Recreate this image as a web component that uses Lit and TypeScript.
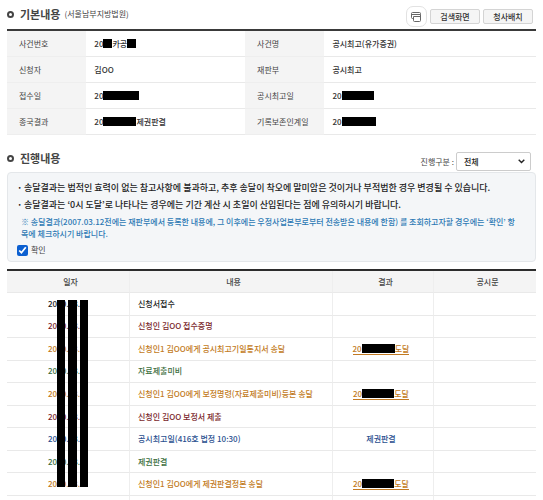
import { LitElement, html, css, nothing } from "lit";
import { customElement, property } from "lit/decorators.js";
import { styleMap } from "lit/directives/style-map.js";

type Part = string | number;

interface Row {
  tone: string;
  date: string;
  text: string;
  result?: Part[];
  link?: boolean;
}

// Numbers in a value are the widths of redaction bars.
const INFO: [string, Part[]][][] = [
  [["사건번호", ["20", 9, "카공", 9]], ["사건명", ["공시최고(유가증권)"]]],
  [["신청자", ["김OO"]], ["재판부", ["공시최고"]]],
  [["접수일", ["20", 36]], ["공시최고일", ["20", 32]]],
  [["종국결과", ["20", 33, "제권판결"]], ["기록보존인계일", ["20", 34]]],
];

const ROWS: Row[] = [
  { tone: "black", date: "2000.03.", text: "신청서접수" },
  { tone: "red", date: "2000.03.", text: "신청인 김OO 접수증명" },
  { tone: "orange", date: "2000.03.", text: "신청인1 김OO에게 공시최고기일통지서 송달", result: ["20", 33, "도달"], link: true },
  { tone: "green", date: "2000.03.", text: "자료제출미비" },
  { tone: "orange", date: "2000.03.", text: "신청인1 김OO에게 보정명령(자료제출미비)등본 송달", result: ["20", 32, "도달"], link: true },
  { tone: "red", date: "2000.03.", text: "신청인 김OO 보정서 제출" },
  { tone: "blue", date: "2000.03.", text: "공시최고일(416호 법정 10:30)", result: ["제권판결"] },
  { tone: "green", date: "2000.03.", text: "제권판결" },
  { tone: "orange", date: "2000.03.", text: "신청인1 김OO에게 제권판결정본 송달", result: ["20", 32, "도달"], link: true },
];

@customElement("masked-text")
class MaskedText extends LitElement {
  @property({ attribute: false }) parts: Part[] = [];

  static styles = css`
    .bar {
      display: inline-block;
      height: 9px;
      background: #000;
      vertical-align: -1px;
    }
  `;

  render() {
    return this.parts.map((p) =>
      typeof p === "number"
        ? html`<span class="bar" style=${styleMap({ width: `${p}px` })}></span>`
        : p
    );
  }
}

@customElement("app-root")
class AppRoot extends LitElement {
  static styles = css`
    :host {
      display: block;
      padding: 6px 7px 0;
      background: #fff;
      color: #333;
      font: 500 8px/12px "Noto Sans CJK KR", "Noto Sans", sans-serif;
    }
    * {
      box-sizing: border-box;
    }
    .head {
      display: flex;
      align-items: flex-start;
      height: 23px;
    }
    .head.second {
      height: 22px;
      margin-top: 15px;
      padding-right: 5px;
    }
    .title {
      display: flex;
      align-items: center;
      height: 16px;
    }
    .ring {
      width: 7px;
      height: 7px;
      border: 2px solid #444;
      border-radius: 50%;
      margin-right: 6px;
    }
    h2 {
      margin: 0;
      font-size: 11px;
      line-height: 16px;
      font-weight: 700;
      color: #444;
    }
    .court {
      margin-left: 4px;
      font-weight: 400;
      color: #444;
    }
    .tools {
      margin-left: auto;
      padding-right: 3px;
      display: flex;
      align-items: center;
      gap: 3px;
    }
    button {
      font: inherit;
      color: #333;
      width: 50px;
      height: 15px;
      padding: 0;
      border: 1px solid #d4d4d4;
      border-radius: 2px;
      background: #f5f5f5;
    }
    .print {
      display: grid;
      place-items: center;
      width: 21px;
      height: 21px;
      border-color: #e2e2e2;
      border-radius: 7px;
      background: #fff;
    }
    table {
      width: 100%;
      table-layout: fixed;
      border-collapse: separate;
      border-spacing: 0;
    }
    th,
    td {
      padding: 0;
      font-weight: 500;
      border-bottom: 1px solid #e9e9e9;
    }
    .info {
      border-top: 2px solid #3a3a3a;
    }
    .info th,
    .info td {
      height: 26px;
      text-align: left;
    }
    .info th {
      padding-left: 12px;
      background: #f4f4f4;
      font-weight: 400;
      color: #444;
      border-bottom-color: #eee;
    }
    .info td {
      padding-left: 8px;
    }
    .i1 { width: 15%; }
    .i2 { width: 30%; }
    .filter {
      margin-left: auto;
      align-self: flex-end;
      display: flex;
      align-items: center;
      gap: 2px;
      padding-bottom: 1px;
      font-weight: 400;
      color: #444;
    }
    .pick {
      display: grid;
      align-items: center;
    }
    .pick > * {
      grid-area: 1 / 1;
    }
    .pick svg {
      justify-self: end;
      margin-right: 6px;
      pointer-events: none;
    }
    select {
      appearance: none;
      width: 75px;
      height: 19px;
      padding: 0 7px;
      border: 1px solid #ccc;
      border-radius: 2px;
      background: #fff;
      font: inherit;
      font-weight: 500;
      color: #222;
    }
    .notice {
      padding: 6px 9px 5px;
      border: 1px solid #e4e7ea;
      border-radius: 4px;
      background: #f4f6f8;
    }
    ul {
      margin: 0;
      padding: 0;
      list-style: none;
      font-size: 9px;
      line-height: 17px;
      color: #222;
    }
    li {
      display: flex;
    }
    li::before {
      content: "·";
      width: 7px;
      font-weight: 700;
    }
    .note {
      margin: 3px 0 0;
      padding: 0 6px 0 4px;
      color: #2b78b4;
    }
    .agree {
      display: flex;
      align-items: center;
      gap: 3px;
      margin-top: 4px;
      font-weight: 400;
      color: #444;
    }
    .agree input {
      width: 11px;
      height: 11px;
      margin: 0;
      accent-color: #0b5fd0;
    }
    .wrap {
      position: relative;
      margin-top: 7px;
    }
    .log {
      height: 231px;
      border-top: 2px solid #2c2c2c;
    }
    .log th {
      height: 22px;
      padding-left: 5px;
      background: #f4f4f4;
      color: #444;
    }
    .log td {
      text-align: center;
      padding-right: 4px;
    }
    .log th + th,
    .log td + td {
      border-left: 1px solid #eee;
    }
    .log .date {
      text-align: left;
      padding-left: 41px;
    }
    .log .text {
      text-align: left;
      padding-left: 8px;
    }
    .log .tail td {
      height: 4px;
      border-bottom: 0;
    }
    .c1 { width: 122px; }
    .c3 { width: 101px; }
    .c4 { width: 103px; }
    .black { color: #222; }
    .red { color: #7a1f2b; }
    .orange { color: #c27a22; }
    .green { color: #3c6e40; }
    .blue { color: #2a4f8f; }
    a {
      color: inherit;
      text-decoration: none;
      border-bottom: 1px solid;
    }
    .strips {
      position: absolute;
      top: 31px;
      left: 50px;
      height: 187px;
      display: grid;
      grid-template-columns: 8px 9px 8px;
      gap: 3px;
    }
    .strips span {
      background: #000;
    }
  `;

  render() {
    return html`
      <header class="head">
        <div class="title">
          <span class="ring"></span>
          <h2>기본내용</h2>
          <span class="court">(서울남부지방법원)</span>
        </div>
        <div class="tools">
          <button class="print" aria-label="인쇄">
            <svg width="11" height="10" viewBox="0 0 11 10" fill="none" stroke="#666">
              <path d="M2.5 6.5H1.5Q.5 6.5 .5 5.5V1.5Q.5 .5 1.5 .5H8.5Q9.5 .5 9.5 1.5V2.5M.5 2.5H9.5M2.5 4.5H9.5V8.5Q9.5 9.5 8.5 9.5H3.5Q2.5 9.5 2.5 8.5ZM9.5 2.5V5" />
            </svg>
          </button>
          <button>검색화면</button>
          <button>청사배치</button>
        </div>
      </header>
      <table class="info">
        <colgroup><col class="i1" /><col class="i2" /><col class="i1" /><col /></colgroup>
        <tbody>
          ${INFO.map(
            (row) => html`<tr>
              ${row.map(
                ([label, value]) => html`<th scope="row">${label}</th>
                  <td><masked-text .parts=${value}></masked-text></td>`
              )}
            </tr>`
          )}
        </tbody>
      </table>

      <header class="head second">
        <div class="title">
          <span class="ring"></span>
          <h2>진행내용</h2>
        </div>
        <div class="filter">
          <label for="kind">진행구분 :</label>
          <span class="pick">
            <select id="kind"><option>전체</option></select>
            <svg width="7" height="5" viewBox="0 0 7 5" fill="none" stroke="#222" stroke-width="1.4">
              <path d="M.7 .8 3.5 3.6 6.3 .8" />
            </svg>
          </span>
        </div>
      </header>
      <section class="notice">
        <ul>
          <li>송달결과는 법적인 효력이 없는 참고사항에 불과하고, 추후 송달이 착오에 말미암은 것이거나 부적법한 경우 변경될 수 있습니다.</li>
          <li>송달결과는 ‘0시 도달’로 나타나는 경우에는 기간 계산 시 초일이 산입된다는 점에 유의하시기 바랍니다.</li>
        </ul>
        <p class="note">
          ※ 송달결과(2007.03.12전에는 재판부에서 등록한 내용에, 그 이후에는 우정사업본부로부터 전송받은 내용에 한함) 를 조회하고자할 경우에는 ‘확인’ 항목에 체크하시기 바랍니다.
        </p>
        <label class="agree"><input type="checkbox" checked />확인</label>
      </section>

      <div class="wrap">
        <table class="log">
          <colgroup><col class="c1" /><col /><col class="c3" /><col class="c4" /></colgroup>
          <thead>
            <tr><th>일자</th><th>내용</th><th>결과</th><th>공시문</th></tr>
          </thead>
          <tbody>
            ${ROWS.map((r) => {
              const result = r.result ? html`<masked-text .parts=${r.result}></masked-text>` : nothing;
              return html`<tr class=${r.tone}>
                <td class="date">${r.date}</td>
                <td class="text">${r.text}</td>
                <td>${r.link ? html`<a href="#">${result}</a>` : result}</td>
                <td></td>
              </tr>`;
            })}
            <tr class="tail"><td></td><td></td><td></td><td></td></tr>
          </tbody>
        </table>
        <div class="strips"><span></span><span></span><span></span></div>
      </div>
    `;
  }
}
